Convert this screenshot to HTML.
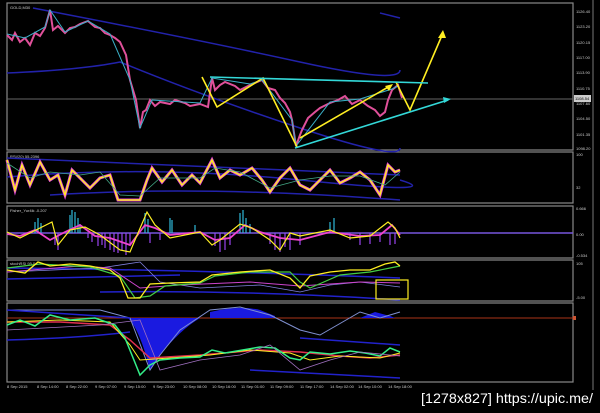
<!DOCTYPE html><html><head><style>body{margin:0;background:#000;width:600px;height:408px;overflow:hidden;font-family:"Liberation Sans",sans-serif}</style></head><body>
<svg width="600" height="408" xmlns="http://www.w3.org/2000/svg" font-family="Liberation Sans, sans-serif">
<rect width="600" height="408" fill="#000"/>
<line x1="593" y1="0" x2="593" y2="390" stroke="#777" stroke-width="1"/>
<g fill="none" stroke="#888" stroke-width="1.2">
<rect x="7" y="3" width="566" height="147"/>
<rect x="7" y="152" width="566" height="51"/>
<rect x="7" y="206" width="566" height="52"/>
<rect x="7" y="260" width="566" height="41"/>
<rect x="7" y="303" width="566" height="79"/>
</g>
<g fill="#ccc" font-size="4">
<text x="10" y="9">GOLD,M30</text><text x="10" y="158">RSI(20) 55.2396</text><text x="10" y="212">Fisher_Yur4ik -0.207</text><text x="10" y="265">stochRSI 95.0</text>
<text x="576" y="13">1126.40</text><text x="576" y="28">1123.20</text><text x="576" y="44">1120.15</text><text x="576" y="59">1117.00</text><text x="576" y="74">1113.90</text><text x="576" y="90">1110.75</text><text x="576" y="105">1107.60</text><text x="576" y="120">1104.50</text><text x="576" y="136">1101.35</text><text x="576" y="150">1098.20</text>
<text x="576" y="156">100</text><text x="576" y="189">32</text><text x="576" y="210">0.666</text><text x="576" y="236">0.00</text><text x="576" y="257">-0.534</text><text x="576" y="265">105</text><text x="576" y="299">-5.00</text>
</g>
<rect x="574" y="95" width="17" height="7" fill="#ccc"/><text x="575" y="100" font-size="4" fill="#000">1108.54</text>
<rect x="573" y="316" width="3" height="4" fill="#c53"/>
<g font-size="4" fill="#ccc"><text x="7" y="388">8 Sep 2015</text><text x="37" y="388">8 Sep 14:00</text><text x="66" y="388">8 Sep 22:00</text><text x="95" y="388">9 Sep 07:00</text><text x="124" y="388">9 Sep 15:00</text><text x="153" y="388">9 Sep 23:00</text><text x="183" y="388">10 Sep 08:00</text><text x="212" y="388">10 Sep 16:00</text><text x="241" y="388">11 Sep 01:00</text><text x="270" y="388">11 Sep 09:00</text><text x="300" y="388">11 Sep 17:00</text><text x="330" y="388">14 Sep 02:00</text><text x="358" y="388">14 Sep 10:00</text><text x="388" y="388">14 Sep 18:00</text></g>
<text x="421" y="403" font-size="14" fill="#fff" textLength="172" lengthAdjust="spacingAndGlyphs">[1278x827] https://upic.me/</text>
<!-- main -->
<line x1="7" y1="99" x2="573" y2="99" stroke="#666"/>
<g fill="none" stroke="#2222aa" stroke-width="1.5">
<path d="M33 8 Q200 40 300 62 T400 70"/><path d="M7 73 Q80 70 120 62 Q200 95 300 128 T400 148"/><path d="M380 13 L400 18"/>
</g>
<polyline fill="none" stroke="#e0509a" stroke-width="2" points="7,35 12,40 15,33 20,42 25,38 30,45 35,33 40,36 45,28 50,10 53,30 58,26 65,33 70,28 75,27 80,24 88,21 95,27 100,28 105,33 110,35 115,38 120,42 126,55 130,80 133,90 136,100 140,128 143,112 146,110 150,100 155,106 160,102 170,104 175,100 185,103 190,106 200,104 208,107 212,78 215,90 220,85 225,82 235,86 240,90 250,85 262,80 268,88 275,90 280,98 285,103 290,112 292,120 296,146 300,135 302,130 308,118 315,112 320,108 330,103 338,100 345,96 352,104 360,100 368,106 375,110 380,116 385,112 388,100 392,90 398,85 402,98"/>
<polyline fill="none" stroke="#3ab0c8" stroke-width="1" points="7,34 25,38 45,27 50,10 65,32 88,21 110,34 130,80 140,128 152,100 200,103 212,78 250,84 262,80 292,120 296,146 330,102 360,99 392,89 398,86"/>
<g stroke="#ffee22" stroke-width="1.6" fill="none">
<polyline points="202,77 217,107 263,78 297,147"/><polyline points="300,138 390,86"/><polyline points="396,82 410,110 443,33"/>
</g>
<polygon points="443,30 438,38 446,38" fill="#ffee22"/><polygon points="393,84 385,86 389,91" fill="#ffee22"/>
<g stroke="#33d8d8" stroke-width="1.6"><line x1="210" y1="77" x2="428" y2="83"/><line x1="295" y1="148" x2="448" y2="100"/></g>
<polygon points="451,99 443,97 444,103" fill="#33d8d8"/>
<!-- RSI -->
<g fill="none" stroke="#2222aa" stroke-width="1.5"><path d="M7 158 L400 175"/><path d="M7 177 Q150 165 300 180 T400 180"/><path d="M50 195 Q200 185 400 200"/></g>
<polyline fill="none" stroke="#e040e0" stroke-width="3" points="7,160 15,190 22,165 30,185 40,162 50,180 58,175 65,195 72,170 80,178 90,188 100,178 110,175 118,200 130,200 140,200 147,180 152,168 162,182 172,170 182,185 192,175 200,183 212,160 220,178 230,170 240,175 252,168 262,180 270,192 280,178 290,168 300,185 310,190 320,180 330,170 340,183 350,178 360,172 370,180 380,195 388,165 395,172 400,170"/>
<polyline fill="none" stroke="#ffee22" stroke-width="1.5" points="7,160 15,190 22,165 30,185 40,162 50,180 58,175 65,195 72,170 80,178 90,188 100,178 110,175 118,200 130,200 140,200 147,180 152,168 162,182 172,170 182,185 192,175 200,183 212,160 220,178 230,170 240,175 252,168 262,180 270,192 280,178 290,168 300,185 310,190 320,180 330,170 340,183 350,178 360,172 370,180 380,195 388,165 395,172 400,170"/>
<polyline fill="none" stroke="#4a8" stroke-width="0.8" points="7,163 30,178 50,172 80,175 100,172 120,195 140,196 160,178 200,178 215,168 240,172 270,188 300,180 330,176 360,176 385,185 400,172"/>
<!-- fisher -->
<line x1="7" y1="233" x2="573" y2="233" stroke="#7755dd" stroke-width="1.5"/>
<g stroke="#30b8d8" stroke-width="1.2"><path d="M35 233V222M38 233V218M41 233V223M70 233V215M72 233V210M75 233V212M78 233V218M80 233V224M145 233V213M148 233V219M170 233V218M172 233V220M195 233V225M240 233V213M243 233V210M246 233V218M250 233V224M330 233V222M334 233V218"/></g>
<g stroke="#9944ee" stroke-width="1.2"><path d="M55 233V245M58 233V250M88 233V238M92 233V242M98 233V246M102 233V245M105 233V248M110 233V250M114 233V252M118 233V253M122 233V250M126 233V255M130 233V246M150 233V243M160 233V240M215 233V246M220 233V252M225 233V250M230 233V245M270 233V244M275 233V250M280 233V252M285 233V247M290 233V250M300 233V245M350 233V240M360 233V245M370 233V244M380 233V242M390 233V245M395 233V244"/></g>
<polyline fill="none" stroke="#ee44cc" stroke-width="1.8" points="7,234 20,236 35,230 50,240 65,232 80,225 95,236 110,238 130,245 145,225 155,228 170,235 200,232 215,240 230,238 245,225 260,232 280,238 300,240 330,232 360,236 380,235 392,225 400,235"/>
<polyline fill="none" stroke="#ffee22" stroke-width="1.2" points="7,232 20,238 40,228 52,222 58,245 70,230 85,227 100,235 120,250 130,252 135,240 147,212 155,225 170,238 200,232 212,245 220,240 240,224 252,228 270,240 280,250 290,233 300,236 330,230 350,238 370,236 388,222 395,228 400,238"/>
<!-- stoch -->
<g fill="none" stroke="#2222cc" stroke-width="1.5"><path d="M7 268 Q200 270 400 278"/><path d="M7 279 L180 275"/><path d="M100 292 Q250 290 400 300"/></g>
<polyline fill="none" stroke="#8080dd" stroke-width="0.8" points="7,272 100,268 140,262 160,282 200,288 260,285 300,292 330,285 360,282 400,287"/>
<polyline fill="none" stroke="#cc44cc" stroke-width="1" points="7,272 80,266 110,268 140,288 180,285 250,282 300,286 360,282 400,283"/>
<polyline fill="none" stroke="#44cc44" stroke-width="1.2" points="7,268 40,264 90,267 120,276 135,298 150,296 165,286 200,283 215,276 250,272 290,272 300,282 310,288 340,275 370,272 390,268 400,266"/>
<polyline fill="none" stroke="#ffee22" stroke-width="1.3" points="7,270 25,273 38,262 50,266 70,264 90,266 110,270 120,278 128,298 140,298 150,284 170,283 200,282 212,275 240,272 270,270 290,278 300,288 310,276 330,272 350,270 370,270 385,264 395,262 400,266"/>
<rect x="376" y="280" width="32" height="19" fill="none" stroke="#ffee22" stroke-width="1.2"/>
<!-- bottom -->
<line x1="7" y1="318" x2="573" y2="318" stroke="#aa3318" stroke-width="1"/>
<path d="M128 318 Q140 330 150 370 L160 355 Q180 330 200 318Z" fill="#1a1ae0"/>
<path d="M210 318 L210 312 Q240 305 260 310 L275 316 L275 318Z" fill="#1a1ae0"/>
<path d="M360 318 L375 312 L390 316 L395 318Z" fill="#1a1ae0"/>
<polyline fill="none" stroke="#8090d0" stroke-width="1" points="7,310 100,310 130,318 150,370 160,355 180,330 210,310 240,307 270,315 300,330 320,335 360,312 380,318 400,312"/>
<g fill="none" stroke="#2222cc" stroke-width="1.5"><path d="M7 340 Q80 338 130 332"/><path d="M7 310 L130 318"/><path d="M300 338 L400 345"/><path d="M250 370 L400 378"/></g>
<polyline fill="none" stroke="#e03050" stroke-width="1.5" points="7,322 60,322 110,325 130,340 150,358 200,355 260,350 300,352 340,356 370,358 400,355"/>
<polyline fill="none" stroke="#ffee22" stroke-width="1" points="7,322 60,320 110,322 130,345 140,360 170,358 210,355 250,350 290,353 310,360 340,356 380,358 400,353"/>
<polyline fill="none" stroke="#33ee88" stroke-width="1.5" points="7,325 20,320 35,326 50,315 70,320 95,318 115,325 125,338 140,375 150,365 160,360 180,358 200,357 212,350 225,353 260,347 275,348 290,358 300,360 310,352 330,354 350,351 365,353 380,356 390,348 400,352"/>
<polyline fill="none" stroke="#a070c0" stroke-width="0.8" points="7,330 100,325 140,320 160,370 200,360 240,355 270,345 300,370 330,360 360,352 400,356"/>
</svg>
</body></html>
